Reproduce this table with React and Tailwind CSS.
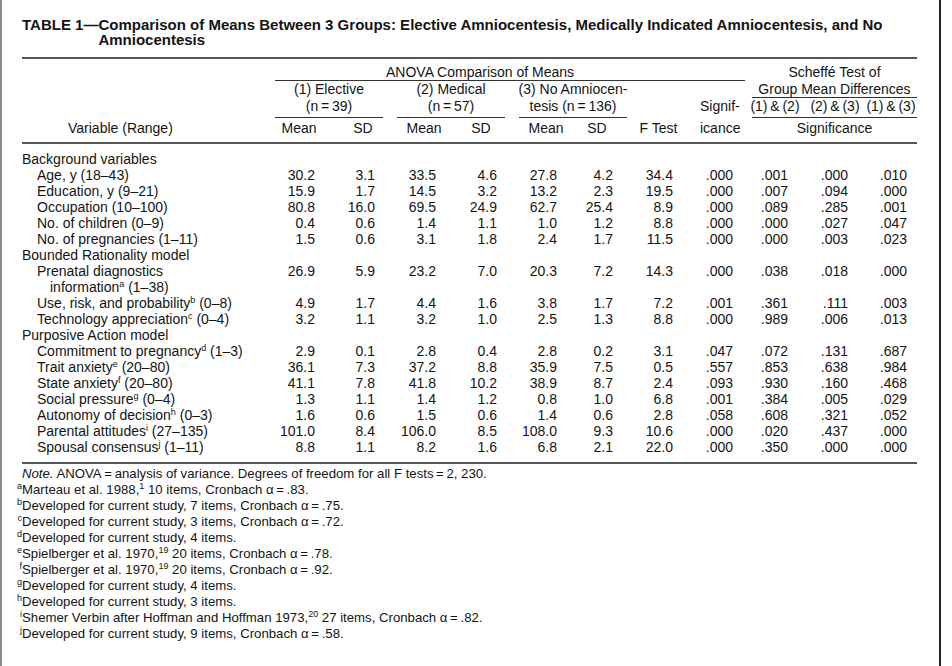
import React from "react";

const GRID =
  "grid grid-cols-[253px_54px_54px_14px_54px_54px_14px_54px_54px_63px_55px_60px_60px_52px]";

// one class string per numeric column, right edges picked from the scan
const NUM_COLS = [
  "col-start-2 pr-[14px]",
  "col-start-3 pr-[8px]",
  "col-start-5 pr-[15px]",
  "col-start-6 pr-[8px]",
  "col-start-8 pr-[16px]",
  "col-start-9 pr-[14px]",
  "col-start-10 pr-[17px]",
  "col-start-11 pr-[12px]",
  "col-start-12 pr-[17px]",
  "col-start-13 pr-[17px]",
  "col-start-14 pr-[10px]",
];

const T = "\u2009"; // thin space round "=" and "&"

const Sup = ({ children }) => <sup className="text-[9px] -top-[5px]">{children}</sup>;
const Alpha = ({ v }) => <>{`Cronbach α${T}=${T}${v}.`}</>;

const SECTIONS = [
  {
    title: "Background variables",
    rows: [
      { label: <>Age, y (18–43)</>, v: ["30.2", "3.1", "33.5", "4.6", "27.8", "4.2", "34.4", ".000", ".001", ".000", ".010"] },
      { label: <>Education, y (9–21)</>, v: ["15.9", "1.7", "14.5", "3.2", "13.2", "2.3", "19.5", ".000", ".007", ".094", ".000"] },
      { label: <>Occupation (10–100)</>, v: ["80.8", "16.0", "69.5", "24.9", "62.7", "25.4", "8.9", ".000", ".089", ".285", ".001"] },
      { label: <>No. of children (0–9)</>, v: ["0.4", "0.6", "1.4", "1.1", "1.0", "1.2", "8.8", ".000", ".000", ".027", ".047"] },
      { label: <>No. of pregnancies (1–11)</>, v: ["1.5", "0.6", "3.1", "1.8", "2.4", "1.7", "11.5", ".000", ".000", ".003", ".023"] },
    ],
  },
  {
    title: "Bounded Rationality model",
    rows: [
      {
        label: (
          <>
            Prenatal diagnostics
            <br />
            information<Sup>a</Sup> (1–38)
          </>
        ),
        v: ["26.9", "5.9", "23.2", "7.0", "20.3", "7.2", "14.3", ".000", ".038", ".018", ".000"],
      },
      { label: <>Use, risk, and probability<Sup>b</Sup> (0–8)</>, v: ["4.9", "1.7", "4.4", "1.6", "3.8", "1.7", "7.2", ".001", ".361", ".111", ".003"] },
      { label: <>Technology appreciation<Sup>c</Sup> (0–4)</>, v: ["3.2", "1.1", "3.2", "1.0", "2.5", "1.3", "8.8", ".000", ".989", ".006", ".013"] },
    ],
  },
  {
    title: "Purposive Action model",
    rows: [
      { label: <>Commitment to pregnancy<Sup>d</Sup> (1–3)</>, v: ["2.9", "0.1", "2.8", "0.4", "2.8", "0.2", "3.1", ".047", ".072", ".131", ".687"] },
      { label: <>Trait anxiety<Sup>e</Sup> (20–80)</>, v: ["36.1", "7.3", "37.2", "8.8", "35.9", "7.5", "0.5", ".557", ".853", ".638", ".984"] },
      { label: <>State anxiety<Sup>f</Sup> (20–80)</>, v: ["41.1", "7.8", "41.8", "10.2", "38.9", "8.7", "2.4", ".093", ".930", ".160", ".468"] },
      { label: <>Social pressure<Sup>g</Sup> (0–4)</>, v: ["1.3", "1.1", "1.4", "1.2", "0.8", "1.0", "6.8", ".001", ".384", ".005", ".029"] },
      { label: <>Autonomy of decision<Sup>h</Sup> (0–3)</>, v: ["1.6", "0.6", "1.5", "0.6", "1.4", "0.6", "2.8", ".058", ".608", ".321", ".052"] },
      { label: <>Parental attitudes<Sup>i</Sup> (27–135)</>, v: ["101.0", "8.4", "106.0", "8.5", "108.0", "9.3", "10.6", ".000", ".020", ".437", ".000"] },
      { label: <>Spousal consensus<Sup>j</Sup> (1–11)</>, v: ["8.8", "1.1", "8.2", "1.6", "6.8", "2.1", "22.0", ".000", ".350", ".000", ".000"] },
    ],
  },
];

const NOTES = [
  ["a", <>Marteau et al. 1988,<Sup>1</Sup> 10 items, <Alpha v=".83" /></>],
  ["b", <>Developed for current study, 7 items, <Alpha v=".75" /></>],
  ["c", <>Developed for current study, 3 items, <Alpha v=".72" /></>],
  ["d", <>Developed for current study, 4 items.</>],
  ["e", <>Spielberger et al. 1970,<Sup>19</Sup> 20 items, <Alpha v=".78" /></>],
  ["f", <>Spielberger et al. 1970,<Sup>19</Sup> 20 items, <Alpha v=".92" /></>],
  ["g", <>Developed for current study, 4 items.</>],
  ["h", <>Developed for current study, 3 items.</>],
  ["i", <>Shemer Verbin after Hoffman and Hoffman 1973,<Sup>20</Sup> 27 items, <Alpha v=".82" /></>],
  ["j", <>Developed for current study, 9 items, <Alpha v=".58" /></>],
];

function DataRow({ label, v }) {
  return (
    <div className={GRID}>
      <div className="col-start-1 pl-[28px] -indent-[13px]">{label}</div>
      {v.map((n, i) => (
        <div key={i} className={`${NUM_COLS[i]} text-right`}>
          {n}
        </div>
      ))}
    </div>
  );
}

function Header() {
  return (
    <div className={`${GRID} pt-[5px]`}>
      <div className="col-start-2 col-end-12 row-start-1 border-b border-[#333] pl-[111px]">ANOVA Comparison of Means</div>
      <div className="col-start-12 col-end-15 row-start-1 ml-[7px] text-center">Scheffé Test of</div>

      <div className="col-start-2 col-end-4 row-start-2 text-center">(1) Elective</div>
      <div className="col-start-5 col-end-7 row-start-2 text-center">(2) Medical</div>
      <div className="col-start-8 col-end-10 row-start-2 flex justify-center whitespace-nowrap">
        <span className="-mx-[4px]">(3) No Amniocen-</span>
      </div>
      <div className="col-start-12 col-end-15 row-start-2 ml-[7px] border-b border-[#333] text-center">Group Mean Differences</div>

      <div className="col-start-2 col-end-4 row-start-3 border-b border-[#333] pb-[3px] text-center">{`(n${T}=${T}39)`}</div>
      <div className="col-start-5 col-end-7 row-start-3 border-b border-[#333] pb-[3px] text-center">{`(n${T}=${T}57)`}</div>
      <div className="col-start-8 col-end-10 row-start-3 border-b border-[#333] pb-[3px] text-center">{`tesis (n${T}=${T}136)`}</div>
      <div className="col-start-11 row-start-3 pl-[10px]">Signif-</div>
      <div className="col-start-12 col-end-15 row-start-3 ml-[7px] flex border-b border-[#333] pb-[3px] whitespace-nowrap">
        <span className="-ml-[7px] w-[60px] text-center">{`(1)${T}&${T}(2)`}</span>
        <span className="w-[60px] text-center">{`(2)${T}&${T}(3)`}</span>
        <span className="w-[52px] text-center">{`(1)${T}&${T}(3)`}</span>
      </div>

      <div className="col-start-1 row-start-4 pl-[46px] pt-[2px]">Variable (Range)</div>
      <div className="col-start-2 row-start-4 pr-[6px] pt-[2px] text-center">Mean</div>
      <div className="col-start-3 row-start-4 pl-[14px] pt-[2px] text-center">SD</div>
      <div className="col-start-5 row-start-4 pt-[2px] text-center">Mean</div>
      <div className="col-start-6 row-start-4 pl-[6px] pt-[2px] text-center">SD</div>
      <div className="col-start-8 row-start-4 pt-[2px] text-center">Mean</div>
      <div className="col-start-9 row-start-4 pr-[6px] pt-[2px] text-center">SD</div>
      <div className="col-start-10 row-start-4 pt-[2px] text-center">F Test</div>
      <div className="col-start-11 row-start-4 pl-[10px] pt-[2px]">icance</div>
      <div className="col-start-12 col-end-15 row-start-4 ml-[7px] pt-[2px] text-center">Significance</div>
    </div>
  );
}

export default function App() {
  return (
    <div className="h-[666px] w-[952px] overflow-hidden bg-white font-['Liberation_Sans',Arial,sans-serif] text-[#141414]">
      <div className="h-[666px] w-[941px] border-l-2 border-r-2 border-l-[#8c8c8c] border-r-[#222] pl-[20px] pr-[22px] pt-[17px]">
        <div className="flex text-[15px] font-bold leading-[15px]">
          <span className="shrink-0">TABLE 1—</span>
          <span>
            Comparison of Means Between 3 Groups: Elective Amniocentesis, Medically Indicated Amniocentesis, and No
            Amniocentesis
          </span>
        </div>

        <div className="mt-[10px] h-[2px] bg-[#555]" />

        <div className="text-[14px] leading-4">
          <Header />
          <div className="mt-[6px] h-[2px] bg-[#555]" />

          <div className="pt-[7px] pb-[7px]">
            {SECTIONS.map((s) => (
              <div key={s.title}>
                <div>{s.title}</div>
                {s.rows.map((r, i) => (
                  <DataRow key={i} label={r.label} v={r.v} />
                ))}
              </div>
            ))}
          </div>
          <div className="h-[2px] bg-[#555]" />
        </div>

        <div className="pt-[2px] text-[13.2px] leading-4">
          <div>
            <i>Note.</i> {`ANOVA${T}=${T}analysis of variance. Degrees of freedom for all F tests${T}=${T}2, 230.`}
          </div>
          {NOTES.map(([k, t]) => (
            <div key={k}>
              <sup className="-ml-[6px] inline-block w-[6px] text-right text-[9px] -top-[5px]">{k}</sup>
              {t}
            </div>
          ))}
        </div>
      </div>
    </div>
  );
}
